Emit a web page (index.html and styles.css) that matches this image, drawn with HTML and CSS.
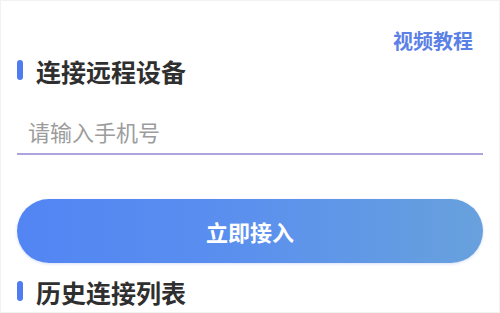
FILE: index.html
```html
<!DOCTYPE html>
<html lang="zh-CN">
<head>
<meta charset="utf-8">
<title>连接远程设备</title>
<link rel="stylesheet" href="styles.css">
</head>
<body>
<div class="page">
  <div class="top-row">
    <a class="video-link">视频教程</a>
  </div>
  <div class="section-title">
    <span class="bar"></span>
    <span class="title-text">连接远程设备</span>
  </div>
  <div class="phone-field">
    <span class="placeholder">请输入手机号</span>
  </div>
  <div class="connect-btn">立即接入</div>
  <div class="section-title history">
    <span class="bar"></span>
    <span class="title-text">历史连接列表</span>
  </div>
</div>
</body>
</html>
```
FILE: styles.css
```css
html, body {
  margin: 0;
  padding: 0;
  background: #ffffff;
}
body {
  font-family: "Noto Sans CJK SC", "Noto Sans", sans-serif;
}
.page {
  box-sizing: border-box;
  width: 500px;
  height: 313px;
  border: 1px solid #f1f2f3;
  padding: 0 16px;
  overflow: hidden;
}
.top-row {
  display: flex;
  justify-content: flex-end;
  padding-top: 30px;
  padding-right: 10px;
}
.video-link {
  font-size: 20px;
  line-height: 20px;
  font-weight: 700;
  color: #5b80e6;
}
.section-title {
  display: flex;
  align-items: flex-start;
  gap: 13px;
  margin-top: 9px;
}
.bar {
  width: 6px;
  height: 20px;
  border-radius: 3px;
  background: #4f7cf0;
  flex: none;
}
.title-text {
  font-size: 25px;
  line-height: 22px;
  font-weight: 700;
  color: #2f2f2f;
}
.phone-field {
  margin-top: 39px;
  padding: 0 0 11px 11px;
  border-bottom: 2px solid #aca4dc;
}
.placeholder {
  display: block;
  font-size: 22px;
  line-height: 21px;
  color: #9c9c9c;
}
.connect-btn {
  margin-top: 44px;
  height: 64px;
  border-radius: 32px;
  background: linear-gradient(90deg, #5285f3 0%, #5a8fef 45%, #68a1dd 100%);
  box-shadow: 0 1px 3px rgba(90, 130, 220, 0.25);
  display: flex;
  align-items: center;
  justify-content: center;
  font-size: 22px;
  font-weight: 700;
  color: #ffffff;
}
.section-title.history {
  margin-top: 18px;
}
```
